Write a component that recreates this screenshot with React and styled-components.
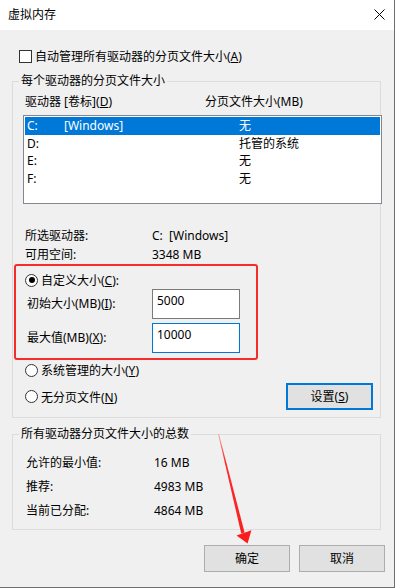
import React from 'react';
import styled, { createGlobalStyle } from 'styled-components';

const GlobalStyle = createGlobalStyle`
  html, body {
    margin: 0;
    padding: 0;
    background: #f0f0f0;
  }
  body {
    font-family: "Noto Sans", "Noto Sans CJK SC", sans-serif;
    font-size: 12px;
    color: #000;
  }
`;

const Window = styled.div`
  position: relative;
  box-sizing: border-box;
  width: 395px;
  height: 588px;
  background: #f0f0f0;
  border-right: 1px solid #6e6e6e;
  border-bottom: 1px solid #6e6e6e;
  overflow: hidden;
`;

const TitleBar = styled.div`
  box-sizing: border-box;
  display: flex;
  align-items: center;
  justify-content: space-between;
  height: 30px;
  padding: 0 9px 1px 8px;
  background: #fff;
  line-height: 16px;
`;

const CheckRow = styled.div`
  display: flex;
  align-items: center;
  gap: 3px;
  height: 16px;
  margin: 18px 0 0 19px;
`;

const CheckBox = styled.span`
  box-sizing: border-box;
  width: 13px;
  height: 13px;
  border: 1px solid #333;
  background: #fff;
`;

const Group = styled.div`
  box-sizing: border-box;
  width: 369px;
  height: ${({ $height }) => $height}px;
  margin: ${({ $top }) => $top}px 0 0 12px;
  border: 1px solid #dcdcdc;
`;

const Legend = styled.div`
  width: fit-content;
  margin: -9px 0 0 6px;
  padding: 0 2px;
  line-height: 16px;
  background: #f0f0f0;
`;

const Headers = styled.div`
  display: grid;
  grid-template-columns: 180px 1fr;
  margin-top: 5px;
  padding-left: 12px;
  line-height: 16px;
`;

const ListBox = styled.div`
  box-sizing: border-box;
  width: 359px;
  height: 89px;
  margin: 5px 0 0 10px;
  padding: 1px 1px 0 1px;
  border: 1px solid #828790;
  background: #fff;
`;

const DriveRow = styled.div`
  display: grid;
  grid-template-columns: 37px 175px 1fr;
  align-items: center;
  height: 17.5px;
  padding-left: 2px;
  line-height: 17px;
  background: ${({ $selected }) => ($selected ? '#0078d7' : 'transparent')};
  color: ${({ $selected }) => ($selected ? '#fff' : '#000')};
`;

const InfoList = styled.div`
  display: grid;
  grid-template-columns: ${({ $label }) => $label}px 1fr;
  margin-top: ${({ $top }) => $top}px;
  padding-left: ${({ $left }) => $left}px;
  line-height: ${({ $line }) => $line}px;
`;

const Highlight = styled.div`
  box-sizing: border-box;
  width: 244px;
  height: 96px;
  margin-left: 1px;
  padding-top: 6px;
  border: 2px solid #f62b2b;
  border-radius: 3px;
`;

const RadioRow = styled.div`
  display: flex;
  align-items: center;
  gap: 3px;
  height: 16px;
  margin-top: ${({ $top }) => $top || 0}px;
  padding-left: ${({ $left }) => $left || 0}px;
`;

const Radio = styled.span`
  box-sizing: border-box;
  display: flex;
  align-items: center;
  justify-content: center;
  width: 13px;
  height: 13px;
  border: 1px solid #333;
  border-radius: 50%;
  background: #fff;

  &::after {
    content: '';
    display: ${({ $checked }) => ($checked ? 'block' : 'none')};
    width: 6px;
    height: 6px;
    border-radius: 50%;
    background: #000;
  }
`;

const FieldRow = styled.div`
  display: flex;
  align-items: center;
  margin-top: ${({ $top }) => $top}px;
  padding-left: 11px;
`;

const FieldLabel = styled.span`
  width: 125px;
  line-height: 16px;
`;

const TextBox = styled.div`
  box-sizing: border-box;
  width: 88px;
  height: 30px;
  padding: 3px 4px;
  border: 1px solid ${({ $focused }) => ($focused ? '#0078d7' : '#7a7a7a')};
  background: #fff;
  line-height: 16px;
`;

const BottomRow = styled.div`
  display: flex;
  align-items: center;
  justify-content: space-between;
  margin-top: 5px;
  padding: 0 7px 0 12px;
`;

const Button = styled.div`
  box-sizing: border-box;
  display: flex;
  align-items: center;
  justify-content: center;
  width: ${({ $width }) => $width}px;
  height: 27px;
  border: ${({ $default }) => ($default ? '2px solid #0078d7' : '1px solid #adadad')};
  background: #e1e1e1;
  line-height: 16px;
`;

const Actions = styled.div`
  display: flex;
  justify-content: flex-end;
  gap: 9px;
  margin-top: 15px;
  padding-right: 9px;
`;

const Overlay = styled.svg`
  position: absolute;
  top: 0;
  left: 0;
  pointer-events: none;
`;

const drives = [
  { letter: 'C:', label: '[Windows]', size: '无', selected: true },
  { letter: 'D:', label: '', size: '托管的系统' },
  { letter: 'E:', label: '', size: '无' },
  { letter: 'F:', label: '', size: '无' },
];

const totals = [
  ['允许的最小值:', '16 MB'],
  ['推荐:', '4983 MB'],
  ['当前已分配:', '4864 MB'],
];

export default function App() {
  return (
    <>
      <GlobalStyle />
      <Window>
        <TitleBar>
          <span>虚拟内存</span>
          <svg width="11" height="11" viewBox="0 0 11 11">
            <path d="M0.5 0.5 L10.5 10.5 M10.5 0.5 L0.5 10.5" stroke="#000" strokeWidth="1" fill="none" />
          </svg>
        </TitleBar>

        <CheckRow>
          <CheckBox />
          <span>自动管理所有驱动器的分页文件大小(<u>A</u>)</span>
        </CheckRow>

        <Group $top={17} $height={337}>
          <Legend>每个驱动器的分页文件大小</Legend>
          <Headers>
            <span>驱动器 [卷标](<u>D</u>)</span>
            <span>分页文件大小(MB)</span>
          </Headers>
          <ListBox>
            {drives.map((d) => (
              <DriveRow key={d.letter} $selected={d.selected}>
                <span>{d.letter}</span>
                <span>{d.label}</span>
                <span>{d.size}</span>
              </DriveRow>
            ))}
          </ListBox>

          <InfoList $top={22} $left={12} $label={127} $line={19}>
            <span>所选驱动器:</span>
            <span>C:&nbsp;&nbsp;[Windows]</span>
            <span>可用空间:</span>
            <span>3348 MB</span>
          </InfoList>

          <Highlight>
            <RadioRow $left={9}>
              <Radio $checked />
              <span>自定义大小(<u>C</u>):</span>
            </RadioRow>
            <FieldRow $top={1}>
              <FieldLabel>初始大小(MB)(<u>I</u>):</FieldLabel>
              <TextBox>5000</TextBox>
            </FieldRow>
            <FieldRow $top={4}>
              <FieldLabel>最大值(MB)(<u>X</u>):</FieldLabel>
              <TextBox $focused>10000</TextBox>
            </FieldRow>
          </Highlight>

          <RadioRow $top={2} $left={12}>
            <Radio />
            <span>系统管理的大小(<u>Y</u>)</span>
          </RadioRow>
          <BottomRow>
            <RadioRow>
              <Radio />
              <span>无分页文件(<u>N</u>)</span>
            </RadioRow>
            <Button $width={87} $default>设置(<u>S</u>)</Button>
          </BottomRow>
        </Group>

        <Group $top={16} $height={96}>
          <Legend>所有驱动器分页文件大小的总数</Legend>
          <InfoList $top={9} $left={13} $label={128} $line={24}>
            {totals.map(([label, value]) => (
              <React.Fragment key={label}>
                <span>{label}</span>
                <span>{value}</span>
              </React.Fragment>
            ))}
          </InfoList>
        </Group>

        <Actions>
          <Button $width={86}>确定</Button>
          <Button $width={86}>取消</Button>
        </Actions>

        <Overlay width="395" height="588" viewBox="0 0 395 588">
          <defs>
            <linearGradient id="arrowFade" x1="0" y1="434" x2="0" y2="545" gradientUnits="userSpaceOnUse">
              <stop offset="0" stopColor="#ff3b3b" stopOpacity="0.5" />
              <stop offset="0.25" stopColor="#ff2a2a" />
              <stop offset="1" stopColor="#f81e1e" />
            </linearGradient>
          </defs>
          <polygon
            points="218.2,434.2 218.9,433.9 244.6,532.5 241.2,533.5"
            fill="url(#arrowFade)"
          />
          <polygon points="236.5,535.5 247.6,543.6 251.4,530.2" fill="#f81e1e" />
        </Overlay>
      </Window>
    </>
  );
}
